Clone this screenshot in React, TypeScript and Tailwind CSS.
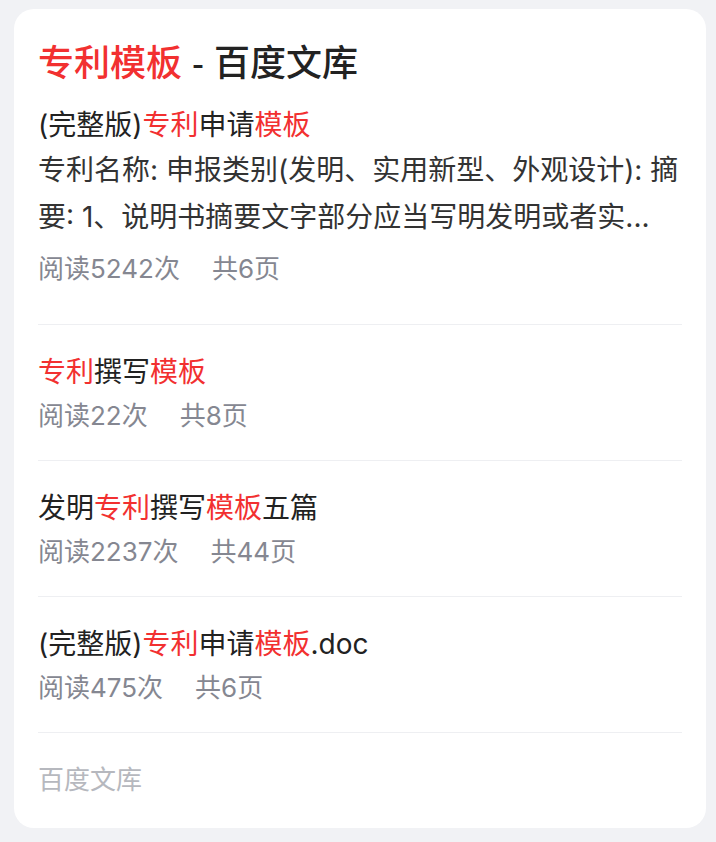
import React from 'react';

type Part = { text: string; hit?: boolean };

interface DocItem {
  title: Part[];
  reads: number;
  pages: number;
}

const docs: DocItem[] = [
  {
    title: [{ text: '专利', hit: true }, { text: '撰写' }, { text: '模板', hit: true }],
    reads: 22,
    pages: 8,
  },
  {
    title: [{ text: '发明' }, { text: '专利', hit: true }, { text: '撰写' }, { text: '模板', hit: true }, { text: '五篇' }],
    reads: 2237,
    pages: 44,
  },
  {
    title: [{ text: '(完整版)' }, { text: '专利', hit: true }, { text: '申请' }, { text: '模板', hit: true }, { text: '.doc' }],
    reads: 475,
    pages: 6,
  },
];

const Title: React.FC<{ parts: Part[] }> = ({ parts }) => (
  <div className="text-[28px] leading-[44px] text-[#222222] whitespace-nowrap">
    {parts.map((p, i) => (
      <span key={i} className={p.hit ? 'text-[#f23030]' : ''}>
        {p.text}
      </span>
    ))}
  </div>
);

const Meta: React.FC<{ reads: number; pages: number; className?: string }> = ({ reads, pages, className = '' }) => (
  <div className={`flex gap-8 text-[26px] leading-[44px] text-[#858791] ${className}`}>
    <span>阅读{reads}次</span>
    <span>共{pages}页</span>
  </div>
);

export default function App() {
  return (
    <div
      className="min-h-screen bg-[#f1f2f5] pt-[9px] pl-[14px]"
      style={{ fontFamily: 'Inter, "Noto Sans CJK SC", sans-serif' }}
    >
      <div className="w-[692px] rounded-[20px] bg-white px-6 pt-[30px]">
        {/* Header */}
        <h1
          className="text-[36px] leading-[50px] font-medium text-[#222222]"
          style={{ fontFamily: '"Liberation Sans", "Noto Sans CJK SC", sans-serif' }}
        >
          <span className="text-[#f23030]">专利模板</span> - 百度文库
        </h1>

        {/* First result, with summary */}
        <div className="mt-[14px] pb-[33px]">
          <Title
            parts={[
              { text: '(完整版)' },
              { text: '专利', hit: true },
              { text: '申请' },
              { text: '模板', hit: true },
            ]}
          />
          <p className="text-[28px] leading-[47px] text-[#333333]">
            专利名称: 申报类别(发明、实用新型、外观设计): 摘要: 1、说明书摘要文字部分应当写明发明或者实...
          </p>
          <Meta reads={5242} pages={6} className="mt-[6px]" />
        </div>

        {docs.map((d, i) => (
          <div key={i} className="border-t border-[#eeeff2] pt-[25px] pb-[22px]">
            <Title parts={d.title} />
            <Meta reads={d.reads} pages={d.pages} />
          </div>
        ))}

        {/* Footer */}
        <div className="border-t border-[#eeeff2] pt-[25px] pb-[26px]">
          <span className="text-[26px] leading-[44px] text-[#b6b8be] block">百度文库</span>
        </div>
      </div>
    </div>
  );
}
